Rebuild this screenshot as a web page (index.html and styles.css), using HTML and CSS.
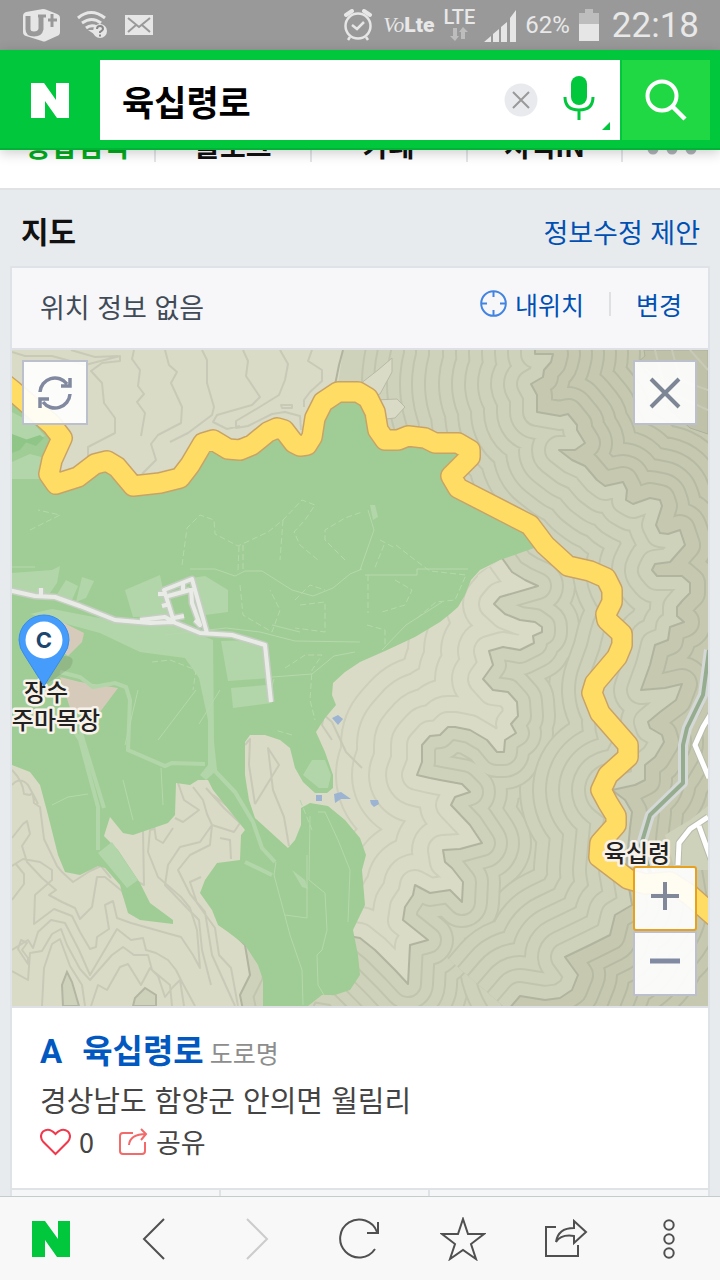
FILE: index.html
```html
<!DOCTYPE html>
<html lang="ko">
<head>
<meta charset="utf-8">
<meta name="viewport" content="width=device-width, initial-scale=1">
<title>육십령로</title>
<link rel="stylesheet" href="styles.css">
</head>
<body>
<div class="status">
  <svg width="38" height="34" viewBox="22 8 38 34" aria-hidden="true"><path fill="#e6e6e6" d="M23 16q0-3 3-4l17-3q2 0 4 1l10 4q3 1 3 4v14q0 3-3 4l-11 5q-2 1-4 0l-16-5q-3-1-3-4z"/><path fill="none" stroke="#999" stroke-width="5" d="M28 16v13q0 5 6 5t7-5V16"/><path fill="none" stroke="#999" stroke-width="3" d="M38 16h8M52 14v13M48 20h9"/></svg>
  <svg width="32" height="30" viewBox="73 11 32 30" aria-hidden="true"><g fill="none" stroke="#e6e6e6" stroke-width="3"><path d="M75 19q13-11 27 0M79 24q10-7 19 0M83 29q5-4 11-1"/></g><path fill="#e6e6e6" d="M85 31h6v4z"/><circle cx="97" cy="32" r="7" fill="#e6e6e6"/><path fill="none" stroke="#888" stroke-width="2" d="M94 30q0-3 3-3t3 3q0 1-3 3v1M97 35.500v2"/></svg>
  <svg width="29" height="22" viewBox="122 14 29 22" aria-hidden="true"><path fill="#e6e6e6" d="M123 15h28v20h-28z"/><path fill="none" stroke="#999" stroke-width="2" d="M126 18l11 9 11-9M126 32l8-7M148 32l-8-7"/></svg>
  <div class="status-right">
    <svg width="31" height="33" viewBox="347 9 31 33" aria-hidden="true"><g fill="none" stroke="#e6e6e6" stroke-width="2.500"><circle cx="362" cy="26" r="12.500"/><path d="M356 25l5 4 7-7M354 37l-2 3M370 37l2 3"/><path stroke-width="4" stroke-linecap="round" d="M350 15l6-4M374 15l-6-4"/></g></svg>
    <span class="volte"><i>Vo</i><b>Lte</b></span>
    <span class="lte">LTE<svg width="18" height="16" viewBox="0 0 18 16" aria-hidden="true"><path fill="#bdbdbd" d="M3 2h4v8h2l-4 5-5-5h3zM11 13V6H9l4-5 5 5h-3v7z"/></svg></span>
    <svg width="32" height="33" viewBox="484 8 32 33" aria-hidden="true"><path fill="#e6e6e6" d="M484 41l7-6v6zM493 33l6-5v13h-6zM501 26l6-5v20h-6zM510 17l6-8v32h-6z"/></svg>
    <span class="percent">62%</span>
    <svg width="20" height="32" viewBox="0 0 20 32" aria-hidden="true"><path fill="#bdbdbd" d="M6 0h8v4h6v11H0V4h6z"/><path fill="#e6e6e6" d="M0 15h20v17H0z"/></svg>
    <time class="clock">22:18</time>
  </div>
</div>

<header class="header">
  <a class="logo" href="#" aria-label="N"><svg width="40" height="37" viewBox="0 0 40 37"><path fill="#fff" d="M1 1h13l12 17V1h13v35H27L15 19v17H1z"/></svg></a>
  <form class="search">
    <div class="field">
      <input class="query" type="text" value="육십령로" aria-label="검색어">
      <button class="bare" type="button" aria-label="지우기"><svg width="34" height="34" viewBox="0 0 34 34"><circle cx="17" cy="17" r="16.500" fill="#e8eaee"/><path d="M9 9l16 16M25 9L9 25" fill="none" stroke="#999" stroke-width="2"/></svg></button>
      <button class="bare mic" type="button" aria-label="음성 검색"><svg width="48" height="56" viewBox="563 75 48 56"><rect x="571" y="76" width="16" height="29" rx="8" fill="#00c73c"/><path d="M565 97q0 13 14 13t14-13M579 110v10" fill="none" stroke="#00c73c" stroke-width="3"/><path d="M610 122v8h-8z" fill="#00c73c"/></svg></button>
    </div>
    <button class="submit" type="submit" aria-label="검색"><svg width="42" height="42" viewBox="0 0 42 42"><circle cx="17" cy="17" r="14.500" fill="none" stroke="#fff" stroke-width="4"/><path d="M27 27l13 13" stroke="#fff" stroke-width="4.500"/></svg></button>
  </form>
</header>

<main class="main">
  <nav class="tabs">
    <a class="tab on" href="#">종합검색</a><a class="tab" href="#">블로그</a><a class="tab" href="#">카페</a><a class="tab" href="#">지식iN</a>
    <button class="tab more" type="button" aria-label="더보기"><svg width="50" height="12" viewBox="0 0 50 12"><g fill="#b0b5ba"><circle cx="6" cy="6" r="5.500"/><circle cx="25" cy="6" r="5.500"/><circle cx="44" cy="6" r="5.500"/></g></svg></button>
  </nav>

  <div class="section-head"><h1>지도</h1><a href="#">정보수정 제안</a></div>

  <section class="card">
    <div class="place">
      <span class="place-text">위치 정보 없음</span>
      <a class="mine" href="#"><svg width="27" height="27" viewBox="0 0 27 27" aria-hidden="true"><g fill="none" stroke="#4284e0" stroke-width="2"><circle cx="13.500" cy="13.500" r="12.300"/><path d="M13.500 1v6M13.500 20v6M1 13.500h6M20 13.500h6"/></g></svg>내위치</a>
      <a class="change" href="#">변경</a>
    </div>

    <div class="map">
      <svg class="terrain" viewBox="12 350 696 656" role="img" aria-label="육십령로 지도">
        <defs>
          <path id="midline" d="M502 558L512 572 525 580 538 586 500 597 494 604 505 614 520 620 535 622 542 627 542 632 533 636 534 643 520 650 503 647 489 651 493 665 483 679 493 690 508 692 517 702 518 716 511 724 516 733 505 740 504 752 497 752 487 740 470 730 455 727 448 727 440 735 430 736 422 745 422 762 417 775 430 778 440 780 462 784 470 792 455 797 451 805 470 825 482 843 460 849 443 850 445 862 452 868 463 882 462 902 450 890 430 893 415 885 413 895 405 907 403 920 428 940 410 945 408 984 395 970 375 950 360 938 300 928 230 930 245 945 250 975 240 995 243 1010"/>
          <path id="darkline" d="M535 340L535 354 553 354 551 362 544 370 543 377 531 384 537 395 537 412 560 416 568 414 577 425 577 430 585 443 575 450 559 450 572 460 585 466 597 480 605 486 623 482 627 490 626 500 633 504 650 498 660 500 662 506 656 525 660 533 668 534 680 530 685 545 670 562 655 564 652 570 657 576 682 576 690 583 690 593 683 600 677 607 677 616 684 622 670 627 668 640 655 645 650 665 641 690 665 688 682 684 676 700 660 712 648 722 650 728 662 735 664 742 655 757 645 765 645 780 635 785 612 790 625 800 632 812 630 828 626 870 632 905 615 915 610 935 590 945 565 957 578 975 572 990 560 998 545 1000 520 996 508 1010"/>
          <clipPath id="mid"><path d="M343 350H708V1010H243L240 995 250 975 245 945 230 930 300 928 360 938 375 950 395 970 408 984 410 945 428 940 403 920 405 907 413 895 415 885 430 893 450 890 462 902 463 882 452 868 445 862 443 850 460 849 482 843 470 825 451 805 455 797 470 792 462 784 440 780 430 778 417 775 422 762 422 745 430 736 440 735 448 727 455 727 470 730 487 740 497 752 504 752 505 740 516 733 511 724 518 716 517 702 508 692 493 690 483 679 493 665 489 651 503 647 520 650 534 643 533 636 542 632 542 627 535 622 520 620 505 614 494 604 500 597 538 586 525 580 512 572 502 558 330 440z"/></clipPath>
          <clipPath id="dark"><path d="M535 340L535 354 553 354 551 362 544 370 543 377 531 384 537 395 537 412 560 416 568 414 577 425 577 430 585 443 575 450 559 450 572 460 585 466 597 480 605 486 623 482 627 490 626 500 633 504 650 498 660 500 662 506 656 525 660 533 668 534 680 530 685 545 670 562 655 564 652 570 657 576 682 576 690 583 690 593 683 600 677 607 677 616 684 622 670 627 668 640 655 645 650 665 641 690 665 688 682 684 676 700 660 712 648 722 650 728 662 735 664 742 655 757 645 765 645 780 635 785 612 790 625 800 632 812 630 828 626 870 632 905 615 915 610 935 590 945 565 957 578 975 572 990 560 998 545 1000 520 996 508 1010H720V340z"/></clipPath>
          <path id="road" d="M2 382L12 390 52 425 62 438 52 460 49 474 56 484 78 477 95 464 107 461 117 467 133 486 160 483 180 478 190 465 203 443 213 440 228 449 240 450 252 445 268 432 277 428 284 430 294 443 300 446 307 445 312 437 315 418 323 402 338 392 358 392 368 398 375 412 378 430 385 440 398 440 408 436 425 438 435 443 458 443 470 450 470 457 451 476 458 488 530 525 545 545 568 566 590 571 606 578 612 590 612 602 606 614 607 620 622 634 622 645 617 657 595 683 592 693 600 713 628 745 628 757 608 775 601 790 608 803 616 816 616 825 600 843 599 857 628 879 645 884 670 882 690 895 715 917"/>
        </defs>

        <!-- lowland -->
        <path fill="#d9dbc6" d="M12 350h696v656H12z"/>
        <g class="offset low">
          <use href="#midline" stroke-width="164"/><use href="#midline" class="gap" stroke-width="160"/>
          <use href="#midline" stroke-width="132"/><use href="#midline" class="gap" stroke-width="128"/>
          <use href="#midline" stroke-width="98"/><use href="#midline" class="gap" stroke-width="94"/>
          <use href="#midline" stroke-width="64"/><use href="#midline" class="gap" stroke-width="60"/>
          <use href="#midline" stroke-width="32"/><use href="#midline" class="gap" stroke-width="28"/>
        </g>
        <path fill="#d9dbc6" d="M12 740H240L262 1006H12zM245 730H300V850H245z"/>
        <g class="contour">
          <path d="M12 352L25 356 52 356 85 365 120 356 120 361 102 363 91 371 102 383 104 403 115 418 115 433 88 447 88 465M71 350L95 357 118 356M134 350L132 359 140 370 138 386 144 394 137 402 145 413 141 436M165 350L169 365 177 372 171 383 182 407 181 423 158 435 151 444 156 460 142 474M202 350L207 360 207 383 214 407 212 415 188 433 170 442M243 350L248 361 246 376 260 397 252 405 217 415 213 422 227 429 240 426M280 350L288 364 285 380 279 395 258 408 236 421 236 428 248 426 272 414 285 412 300 416 301 430M312 350L308 361 322 370 322 381 310 392 304 400 304 407M281 405L292 405 292 408 282 408z"/>
          <path d="M12 770Q23 781 24 794L30 795Q33 790 34 803L40 807 44 839 57 866 62 872 73 882 90 871 101 866 111 878M12 785Q20 776 28 785L34 796 38 804M12 838L23 824 27 821 30 834 22 846 27 862 42 878 56 890 49 895 62 902 75 908 80 919 92 907 97 877 105 877 122 891 126 900M12 866L23 859 40 862 52 870 52 880 35 895 34 924 54 909 72 916 80 932 90 949 96 947 97 937 109 929 105 905 113 901 117 918 131 923 170 934 181 937 193 955 200 968 197 930 190 908 181 897 158 877 148 852 150 830 154 829M12 950L28 940 33 948 38 932 51 920 65 923 79 950 90 975 117 929 131 940 143 938 146 950 156 953 168 960 176 970 182 982 195 1006M12 971L28 980 30 953 42 951 52 934 61 929 67 945 80 969 90 980 112 955 123 947 134 955 148 955 152 970 170 985 172 1006M42 1006L44 968 52 944 60 939 70 966 82 985 85 1006M91 1006L98 985 107 990 120 967 128 964 141 985 150 968 158 976 165 997 173 987 180 980 184 1006M21 940L27 943 22 950 28 958 28 964 18 949zM12 900L24 884 24 874 15 863"/>
          <path d="M178 783L184 800 199 810 183 822 175 818M193 787L203 800 207 814 212 825 200 842 180 847 168 865 165 885 187 908 199 920 202 950 211 985M206 788L224 808 240 823 234 832 212 825 210 845 190 855 178 870 190 894 205 912 212 955 235 1006M213 795L235 812M220 838L230 840 231 859M143 830L144 885 138 882 115 852M201 877L190 882 197 903 215 928 219 955 231 968 238 1006M154 825L156 839 163 843 173 828"/>
          <path d="M255 804L279 765 268 748 273 790 284 817 289 846M255 804L249 765 250 739 245 745"/>
          <path d="M332 740L322 725 324 715 332 722 346 752 362 768"/>
        </g>
        <path class="knoll" d="M63 1006L62 985 67 972 72 982 79 1006zM133 1006L135 998 145 988 156 995 156 1006z"/>

        <!-- mid slope -->
        <g clip-path="url(#mid)">
          <path fill="#cfd2bb" d="M200 340H720V1010H200z"/>
          <g class="offset middle">
            <use href="#darkline" stroke-width="340"/><use href="#darkline" class="gap" stroke-width="336"/>
            <use href="#darkline" stroke-width="316"/><use href="#darkline" class="gap" stroke-width="312"/>
            <use href="#darkline" stroke-width="290"/><use href="#darkline" class="gap" stroke-width="286"/>
            <use href="#darkline" stroke-width="264"/><use href="#darkline" class="gap" stroke-width="260"/>
            <use href="#darkline" stroke-width="240"/><use href="#darkline" class="gap" stroke-width="236"/>
            <use href="#midline" stroke-width="144"/><use href="#midline" class="gap" stroke-width="140"/>
            <use href="#midline" stroke-width="122"/><use href="#midline" class="gap" stroke-width="118"/>
            <use href="#darkline" stroke-width="214"/><use href="#darkline" class="gap" stroke-width="210"/>
            <use href="#midline" stroke-width="100"/><use href="#midline" class="gap" stroke-width="96"/>
            <use href="#darkline" stroke-width="186"/><use href="#darkline" class="gap" stroke-width="182"/>
            <use href="#midline" stroke-width="76"/><use href="#midline" class="gap" stroke-width="72"/>
            <use href="#darkline" stroke-width="160"/><use href="#darkline" class="gap" stroke-width="156"/>
            <use href="#midline" stroke-width="52"/><use href="#midline" class="gap" stroke-width="48"/>
            <use href="#darkline" stroke-width="134"/><use href="#darkline" class="gap" stroke-width="130"/>
            <use href="#midline" stroke-width="28"/><use href="#midline" class="gap" stroke-width="24"/>
            <use href="#darkline" stroke-width="108"/><use href="#darkline" class="gap" stroke-width="104"/>
            <use href="#darkline" stroke-width="82"/><use href="#darkline" class="gap" stroke-width="78"/>
            <use href="#darkline" stroke-width="56"/><use href="#darkline" class="gap" stroke-width="52"/>
            <use href="#darkline" stroke-width="30"/><use href="#darkline" class="gap" stroke-width="26"/>
          </g>
        </g>
        <path fill="#d9dbc6" stroke="#b8baa7" d="M360 384L378 370 392 358 392 372 380 394 366 400zM375 400L397 399 405 407 395 418 378 420z"/>

        <!-- upper slope -->
        <g clip-path="url(#dark)">
          <path fill="#c6c9b0" d="M500 340H720V1010H500z"/>
          <g class="offset upper">
            <use href="#darkline" stroke-width="200"/><use href="#darkline" class="gap" stroke-width="196"/>
            <use href="#darkline" stroke-width="176"/><use href="#darkline" class="gap" stroke-width="172"/>
            <use href="#darkline" stroke-width="152"/><use href="#darkline" class="gap" stroke-width="148"/>
            <use href="#darkline" stroke-width="128"/><use href="#darkline" class="gap" stroke-width="124"/>
            <use href="#darkline" stroke-width="104"/><use href="#darkline" class="gap" stroke-width="100"/>
            <use href="#darkline" stroke-width="80"/><use href="#darkline" class="gap" stroke-width="76"/>
            <use href="#darkline" stroke-width="56"/><use href="#darkline" class="gap" stroke-width="52"/>
            <use href="#darkline" stroke-width="32"/><use href="#darkline" class="gap" stroke-width="28"/>
          </g>
          <path fill="#bfc2a8" stroke="#adb09b" d="M644 350L645 356 638 362 660 378 670 410 690 428 708 434V350z"/>
          <path class="contour" d="M655 350L665 390 708 410M672 350L680 380 708 390M690 350L708 370"/>
          <path fill="#cfd2bb" d="M665 835L690 820 708 806V870H675z"/>
        </g>
        <use href="#midline" class="ridge"/><use href="#darkline" class="ridge"/>
        <path class="ridge" d="M343 350L339 365 335 385"/>

        <!-- pasture -->
        <path fill="#a0cd95" d="M12 403L34 422 52 440 52 460 49 474 56 484 78 477 95 464 107 461 117 467 133 486 160 483 180 478 190 465 203 443 213 440 228 449 240 450 252 445 268 432 277 428 284 430 294 443 300 446 307 445 312 437 315 418 323 402 338 392 358 392 368 398 375 412 378 430 385 440 398 440 408 436 425 438 435 443 458 443 465 450 451 476 458 488 530 525 537 547 500 560 480 570 471 580 465 595 458 607 450 614 440 622 415 637 385 651 360 662 345 672 333 683 332 695 336 705 325 718 316 732 325 752 333 775 333 788 327 793 315 793 303 782 295 768 290 748 280 740 265 735 250 735 245 742 245 775 249 800 255 818 288 848 295 840 301 825 301 808 310 803 328 806 345 820 360 838 366 855 362 870 365 905 353 930 358 955 360 975 350 990 335 995 322 995 308 1006H263V980L258 965 245 945 228 932 218 925 212 910 200 893 205 880 217 863 240 860 241 835 245 830 213 790 208 780 198 780 190 785 176 783 175 815 168 823 133 835 123 833 110 817 104 836 118 850 140 883 150 903 173 920V924L140 920 128 913 122 893 120 885 105 868 98 866 80 875 65 872 58 855 48 815 40 785 30 772 12 765z"/>
        <g fill="#b2d6a9">
          <path d="M12 412L34 424 45 436 30 442 12 440zM12 462L30 454 45 458 47 479H12zM12 573L52 570 60 566 57 583 45 600 12 592zM66 580L78 586 72 600 56 596zM82 577L94 581 86 598 76 602zM125 590L160 575 165 600 172 616 133 617zM205 576L228 590 228 612 205 615 192 578z"/>
          <path d="M30 614L52 609 120 622 175 624 213 640 214 742 217 770 206 780 200 775 208 765 208 720 199 678 185 658 140 652 100 633z"/>
          <path d="M221 641L255 640 268 648 270 678 228 681zM231 688L267 685 272 703 233 708zM312 760L325 760 331 775 328 788 319 788 303 775zM98 853L112 842 138 880 127 888z"/>
          <path d="M292 870L305 880 308 889 302 887zM370 505L375 505 378 517 373 520z"/>
        </g>
        <path fill="#8fc688" d="M12 434L28 440 20 450 12 453zM22 441L40 435 44 438 36 446z"/>
        <g fill="#d6cbbb"><path d="M62 622L84 633 82 642 68 656 55 645zM60 677L80 682 118 688 100 712 70 708z"/></g>
        <g class="trail-wide">
          <path d="M60 672L80 677 93 687 115 683 126 687 130 700 128 750 165 766 172 763 205 764M70 724L80 740 98 807 98 850M80 730L104 808M214 770L235 792 253 822 262 848 275 862M245 862L272 875"/>
        </g>
        <g class="trail">
          <path d="M12 567H35M190 569L215 569 235 576 245 571 262 571 292 590 313 596 333 588 350 574 362 569M165 635L226 628 260 632 295 641 360 642M272 677L312 674 334 656 355 652M274 679L268 700M220 690L199 724M196 690L158 740M272 625L300 632M368 510L374 530 360 570M365 575L417 575 417 569H468M382 650L406 625 442 602M318 812L325 812 338 840 350 870 348 922M310 816L309 880 325 893 327 930 322 950 317 955 318 985 324 995M307 855L307 918 285 915M276 862L274 875 290 935 302 970 303 1005M161 768L163 805M123 780L128 800 133 820M52 805L68 797 88 794"/>
          <path d="M138 690L125 745"/>
        </g>
        <g class="trail dashed">
          <path d="M182 565L187 528 200 515 214 520 215 534 238 546 268 532 283 520 302 500 315 505 305 520 294 532 300 545 318 560M239 546L238 570M243 545V570M283 520L280 560M295 600L310 585 325 590M240 585L243 615 272 632 280 610 270 590M300 605L325 602 325 632 295 628M345 560L325 540 325 530 345 518 362 512M368 575V613M384 545L374 570M396 545L415 560 430 571 466 575 455 600 436 602 415 620M380 540L395 548M367 625L385 630 385 645M30 530L60 515 38 510M395 580L412 590 405 605 382 612M152 662L170 660 196 670 193 690M292 735L275 730M285 668L305 655 322 655 312 670 310 700 315 720M300 800L312 830"/>
        </g>

        <!-- farm lanes -->
        <g class="lane-edge"><path id="lanes" d="M8 590L35 596 55 597 80 606 115 620 150 623 173 622 200 633 232 635 265 645 271 702M41 597V588M140 620L165 617 174 622M174 622L164 590 192 579 207 633M168 596L190 590M183 592L183 584M191 588L192 603 200 625 195 620M164 594L158 594M170 604L162 606M174 618L184 616"/></g>
        <use href="#lanes" class="lane"/>

        <g fill="#9cb4d1"><path d="M332 718L338 715 343 719 338 725zM316 795H322V801H316zM334 794L341 792 351 799 341 799 335 803zM370 800L378 800 379 804 374 807 371 804z"/></g>

        <!-- highways -->
        <g fill="none" stroke-linejoin="round">
          <path stroke="#d4d8d7" stroke-width="10" d="M709 650L703 695 687 728 683 745 683 783 650 815 641 845 652 878"/>
          <path stroke="#95ad8e" stroke-width="4" d="M709 650L703 695 687 728 683 745 683 783 650 815 641 845 652 878"/>
          <path stroke="#b9bcac" stroke-width="7" d="M712 712L703 727 695 745 709 778M708 817L690 829 679 843 678 865M699 826L712 862"/>
          <path stroke="#fff" stroke-width="5" d="M712 712L703 727 695 745 709 778M708 817L690 829 679 843 678 865M699 826L712 862"/>
        </g>
        <use href="#road" class="road-edge"/><use href="#road" class="road"/>

        <path fill="#6a7c63" opacity=".25" d="M44 686L62 656Q78 655 70 668z"/>
        <text x="46" y="701" class="lbl">장수</text><text x="56" y="729" class="lbl">주마목장</text><text x="637" y="862" class="lbl">육십령</text>
        <path fill="#459cfb" stroke="#388ceb" d="M44 686L25 656Q19 648 19 640A25 25 0 0 1 69 640Q69 648 63 656z"/>
        <circle cx="44" cy="640" r="18.500" fill="#fff"/><text class="pin" x="44" y="648">C</text>
      </svg>

      <button class="tool reload" type="button" aria-label="새로고침"><svg width="38" height="38" viewBox="0 0 38 38"><path d="M4 18A15 15 0 0 1 31 10M34 20A15 15 0 0 1 7 28M34 4v8h-9M4 34v-9h9" fill="none" stroke="#8089a0" stroke-width="3.500"/></svg></button>
      <button class="tool close" type="button" aria-label="닫기"><svg width="32" height="32" viewBox="0 0 32 32"><path d="M2 2l28 28M30 2L2 30" fill="none" stroke="#7d8695" stroke-width="4"/></svg></button>
      <div class="zoom">
        <button class="tool plus" type="button" aria-label="확대"><svg width="28" height="28" viewBox="0 0 28 28"><path d="M14 0v28M0 14h28" stroke="#808899" stroke-width="4"/></svg></button>
        <button class="tool" type="button" aria-label="축소"><svg width="30" height="28" viewBox="0 0 30 28"><path d="M0 14h30" stroke="#808aa2" stroke-width="5"/></svg></button>
      </div>
    </div>

    <div class="info">
      <h2><a href="#"><span class="mark">A</span>육십령로</a> <small>도로명</small></h2>
      <p class="addr">경상남도 함양군 안의면 월림리</p>
      <div class="acts">
        <button class="act" type="button"><svg width="31" height="28" viewBox="0 0 31 28" aria-hidden="true"><path d="M15.500 26L3 13.500Q-1 8 3 3.500Q9-1 15.500 6Q22-1 28 3.500Q32 8 28 13.500z" fill="none" stroke="#f0394d" stroke-width="2"/></svg>0</button>
        <button class="act" type="button"><svg width="29" height="28" viewBox="0 0 29 28" aria-hidden="true"><g fill="none" stroke="#f26a6a" stroke-width="2"><path d="M14 5H4Q1 5 1 8v15q0 3 3 3h19q3 0 3-3v-9"/><path d="M10 17Q11 6 27 6M22 1l5 5-5 6"/></g></svg>공유</button>
      </div>
    </div>
    <div class="foot"><span></span><span></span><span></span></div>
  </section>
</main>

<nav class="toolbar">
  <a href="#" aria-label="N"><svg width="40" height="36" viewBox="0 0 40 36"><path fill="#00c73c" d="M1 0h13l13 18V0h12v36H26L14 19v17H1z"/></svg></a>
  <button type="button" aria-label="뒤로"><svg width="24" height="42" viewBox="0 0 24 42"><path d="M22 1L2 21l20 20"/></svg></button>
  <button class="off" type="button" aria-label="앞으로" disabled><svg width="24" height="42" viewBox="0 0 24 42"><path d="M2 1l20 20L2 41"/></svg></button>
  <button type="button" aria-label="새로고침"><svg width="42" height="42" viewBox="0 0 42 42"><path d="M36 31A19 19 0 1 1 38 14M39 4v11H28"/></svg></button>
  <button type="button" aria-label="즐겨찾기"><svg width="46" height="44" viewBox="0 0 46 44"><path d="M23 2l5 15h16L31 27l5 15-13-9-13 9 5-15L2 17h16z"/></svg></button>
  <button type="button" aria-label="공유"><svg width="44" height="40" viewBox="0 0 44 40"><path d="M12 8H2v29h32V26M12 23Q14 9 30 9V2l12 11-12 11v-7Q17 15 12 23z"/></svg></button>
  <button type="button" aria-label="메뉴"><svg width="14" height="40" viewBox="0 0 14 40"><circle cx="7" cy="6" r="4.700"/><circle cx="7" cy="20" r="4.700"/><circle cx="7" cy="34" r="4.700"/></svg></button>
</nav>
</body>
</html>
```

FILE: styles.css
```css
* { box-sizing: border-box; }
body {
  margin: 0;
  height: 100vh;
  display: flex;
  flex-direction: column;
  background: #e7ebee;
  color: #111;
  font-family: "Noto Sans CJK KR", sans-serif;
}
svg { display: block; flex: none; }
a { color: #0050b4; text-decoration: none; }
button { font: inherit; color: inherit; border: 0; padding: 0; background: none; }
h1, h2, p { margin: 0; }

.status {
  height: 50px;
  flex: none;
  display: flex;
  align-items: center;
  gap: 16px;
  padding: 0 21px 0 22px;
  background: #999;
  color: #e8e8e8;
  font-family: Roboto, sans-serif;
}
.status-right { margin-left: auto; display: flex; align-items: center; gap: 9px; }
.volte { display: flex; font-size: 21px; }
.volte i { font-family: "Liberation Serif", serif; }
.volte b { font-weight: 900; }
.lte { display: flex; flex-direction: column; align-items: center; font-size: 20px; line-height: 17px; font-weight: 500; }
.percent { font-size: 24px; }
.clock { padding-left: 4px; font-size: 35px; }

.header {
  position: relative;
  z-index: 1;
  flex: none;
  height: 100px;
  display: flex;
  align-items: center;
  padding-right: 10px;
  background: #00c73c;
  box-shadow: inset 0 -2px #00b336, 0 3px 12px rgba(0, 0, 0, .2);
}
.logo { flex: none; width: 100px; display: flex; justify-content: center; }
.search { flex: 1; min-width: 0; display: flex; height: 80px; gap: 2px; }
.field { flex: 1; display: flex; align-items: center; background: #fff; padding: 0 9px 0 22px; min-width: 0; }
.query {
  flex: 1;
  width: 0;
  border: 0;
  padding: 0;
  outline: 0;
  background: none;
  font: bold 35px "Noto Sans CJK KR", sans-serif;
  color: #000;
}
.mic { padding: 6px 0 0 25px; }
.submit { flex: none; width: 88px; background: #20d843; display: flex; align-items: center; justify-content: center; }

.main { flex: 1; min-height: 0; margin-top: -22px; overflow-y: auto; scrollbar-width: none; }
.tabs { display: flex; padding-bottom: 26px; background: #fff; border-bottom: 2px solid #dfe3e5; }
.tab {
  flex: 156;
  height: 34px;
  display: flex;
  align-items: center;
  justify-content: center;
  border-right: 2px solid #e3e5e8;
  font-size: 28px;
  line-height: 34px;
  font-weight: bold;
  color: #111;
}
.tab.on { color: #00ae1d; }
.tab.more { flex: 98; border: 0; padding-top: 8px; }

.section-head { display: flex; align-items: center; justify-content: space-between; height: 76px; padding: 6px 20px 0 21px; }
.section-head h1 { font-size: 30px; line-height: 40px; margin-bottom: 3px; }
.section-head a { font-size: 27px; }

.card { margin: 0 10px; border: 2px solid #dfe2e6; background: #fff; }
.place { display: flex; align-items: center; height: 80px; padding: 0 26px 4px 28px; background: #f7f7fa; font-size: 25px; }
.place-text { margin-right: auto; font-size: 27px; color: #414b57; }
.mine, .change { margin-bottom: 5px; }
.mine { display: flex; align-items: center; gap: 8px; }
.change { margin-left: 25px; padding-left: 25px; border-left: 2px solid #dfe0e3; line-height: 24px; }

.map { position: relative; border: solid #dde0e5; border-width: 2px 0; }
.terrain { width: 100%; height: auto; }
.offset { fill: none; stroke-linejoin: round; }
.low { stroke: #cdcfbb; }
.low .gap { stroke: #d9dbc6; }
.middle { stroke: #c2c5ae; }
.middle .gap { stroke: #cfd2bb; }
.upper { stroke: #b8bba4; }
.upper .gap { stroke: #c6c9b0; }
.contour { fill: none; stroke: #c8cab7; stroke-width: 2; stroke-linejoin: round; }
.ridge { fill: none; stroke: #b1b49f; stroke-width: 2; stroke-linejoin: round; }
.knoll { fill: #cfd2bb; stroke: #b3b6a2; stroke-width: 2; }
.trail { fill: none; stroke: #b5d8ac; stroke-width: 1; }
.trail-wide { fill: none; stroke: #b2d6a9; stroke-width: 4; }
.dashed { stroke-dasharray: 6 3; }
.lane-edge { fill: none; stroke: #c6cdc2; stroke-width: 7; }
.lane { fill: none; stroke: #e9ebe7; stroke-width: 4; }
.lane-edge, .lane, .road, .road-edge { stroke-linejoin: round; }
.road-edge { fill: none; stroke: #c9a366; stroke-width: 22; }
.road { fill: none; stroke: #ffdd65; stroke-width: 19; }
.lbl {
  font-size: 24px;
  font-weight: 500;
  text-anchor: middle;
  fill: #222;
  stroke: #f8f3ea;
  stroke-width: 5px;
  stroke-linejoin: round;
  paint-order: stroke;
}
.pin { font: bold 22px Inter, sans-serif; text-anchor: middle; fill: #1c466f; }

.tool {
  display: flex;
  align-items: center;
  justify-content: center;
  width: 64px;
  height: 65px;
  border: 2px solid #bcc0cc;
  background: rgba(255, 255, 255, .91);
}
.reload, .close, .zoom { position: absolute; }
.reload { left: 10px; top: 10px; width: 66px; }
.close { right: 11px; top: 10px; }
.zoom { right: 11px; bottom: 10px; }
.zoom .tool { padding-bottom: 6px; }
.plus { border-color: #e7a11e; border-radius: 3px; }

.info { height: 180px; padding: 19px 28px; color: #444; }
.info h2 { display: flex; align-items: baseline; gap: 6px; font-size: 33px; line-height: 44px; }
.info h2 a { color: #0058c0; }
.mark { margin-right: 20px; font-family: Roboto, sans-serif; }
.info small { font-size: 25px; font-weight: normal; color: #8d8d8d; }
.addr { font-size: 29px; line-height: 50px; }
.acts { display: flex; gap: 25px; }
.act { display: flex; align-items: center; gap: 8px; font-size: 27px; line-height: 36px; }
.foot { display: flex; height: 80px; background: #f5f6f8; border-top: 2px solid #dfe3e6; }
.foot span { flex: 208; border-right: 2px solid #dfe3e6; }
.foot span:last-child { flex: 280; border: 0; }

.toolbar {
  position: relative;
  flex: none;
  display: grid;
  grid-template-columns: repeat(7, 1fr);
  height: 84px;
  border-top: 1px solid #c5cccc;
  background: #f8f8f8;
}
.toolbar > * { display: flex; align-items: center; justify-content: center; }
.toolbar button svg { fill: none; stroke: #505050; stroke-width: 2; }
.toolbar .off svg { stroke: #ccc; }
```
